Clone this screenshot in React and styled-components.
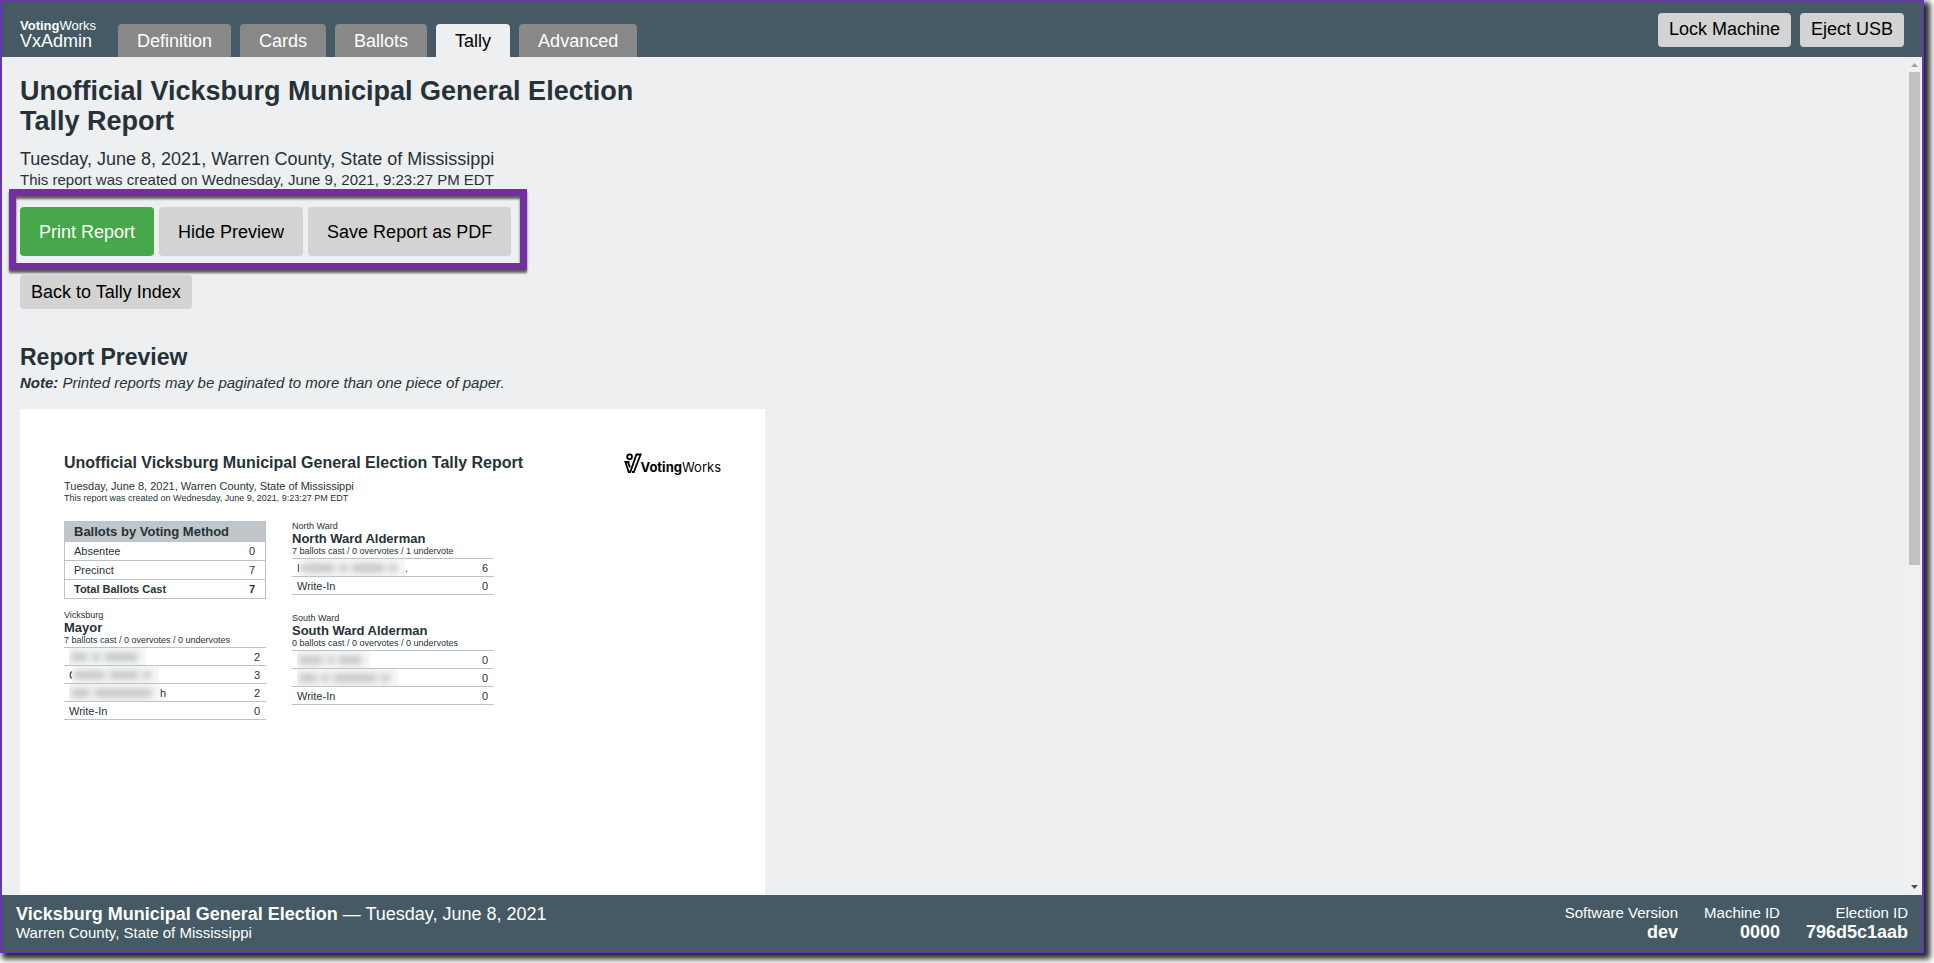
import React from "react";
import styled, { createGlobalStyle, css } from "styled-components";

const GlobalStyle = createGlobalStyle`
  *, *::before, *::after { box-sizing: border-box; }
  html, body { margin: 0; padding: 0; background: #fff; }
  body, button {
    font-family: "Liberation Sans", Arial, Helvetica, sans-serif;
    font-size: 18px;
  }
  h1, h2, h3, p { margin: 0; }
`;

const Screen = styled.div`
  display: flex;
  height: 100vh;
  padding: 0 10px 10px 0;
  overflow: hidden;
`;

const Frame = styled.div`
  display: flex;
  flex: 1;
  flex-direction: column;
  min-width: 0;
  border: 2px solid #6337b3;
  background: #edeff0;
  color: #263238;
  box-shadow: 4px 4px 6px 2px rgba(0, 0, 0, 0.85);
`;

const Header = styled.header`
  display: flex;
  flex: none;
  align-items: flex-end;
  height: 55px;
  padding: 0 18px;
  background: #455a64;
  color: #fff;
`;

const Brand = styled.div`
  display: flex;
  flex-direction: column;
  width: 80px;
  margin: 0 18px 7px 0;
  line-height: 18px;
`;

const BrandMaker = styled.span`
  font-size: 13px;
  line-height: 12px;
`;

const Tabs = styled.nav`
  display: flex;
  flex: 1;
  gap: 9px;
`;

const Tab = styled.button`
  height: 33px;
  padding: 2px 19px 0;
  border: 0;
  border-radius: 4px 4px 0 0;
  background: ${(p) => (p.$active ? "#edeff0" : "#888")};
  color: ${(p) => (p.$active ? "#000" : "#fff")};
`;

const Button = styled.button`
  height: ${(p) => (p.$large ? 49 : 34)}px;
  padding: ${(p) => (p.$large ? "2px 19px 0" : "0 11px")};
  border: 0;
  border-radius: 4px;
  background: ${(p) => (p.$primary ? "#47a74b" : "#d3d3d3")};
  color: ${(p) => (p.$primary ? "#fff" : "#000")};
`;

const HeaderActions = styled.div`
  display: flex;
  align-self: center;
  gap: 9px;
`;

const Body = styled.div`
  display: flex;
  flex: 1;
  min-height: 0;
`;

const Main = styled.main`
  flex: 1;
  min-width: 0;
  padding: 19px 18px;
  overflow-y: auto;
  scrollbar-width: none;
`;

const PageTitle = styled.h1`
  max-width: 640px;
  font-size: 27px;
  line-height: 30px;
`;

const PageMeta = styled.p`
  margin-top: 12px;
  line-height: 22px;
`;

const Small = styled.small`
  display: block;
  font-size: 15px;
  line-height: 20px;
`;

const ActionGroup = styled.div`
  position: relative;
  display: flex;
  gap: 5px;
  width: fit-content;
  margin-top: 17px;

  &::after {
    content: "";
    position: absolute;
    inset: -18px -16px -14px -11px;
    border: 7px solid #7030a0;
    filter: drop-shadow(0 3px 1px rgba(0, 0, 0, 0.6));
    pointer-events: none;
  }
`;

const BackRow = styled.div`
  display: flex;
  margin-top: 19px;
`;

const SectionTitle = styled.h2`
  margin-top: 35px;
  font-size: 23px;
  line-height: 26px;
`;

const Note = styled.p`
  margin-top: 1px;
  font-size: 15px;
  font-style: italic;
  line-height: 24px;
`;

const Paper = styled.article`
  width: 745px;
  min-height: 960px;
  margin-top: 14px;
  padding: 45px 44px;
  background: #fff;
  font-size: 11px;
`;

const PaperHeader = styled.header`
  display: flex;
  justify-content: space-between;
  align-items: flex-start;
`;

const PaperTitle = styled.h1`
  font-size: 16px;
  line-height: 18px;
`;

const PaperMeta = styled.p`
  margin-top: 7px;
  line-height: 14px;
`;

const Fine = styled.small`
  display: block;
  font-size: 9px;
  line-height: 11px;
`;

const Logo = styled.div`
  display: flex;
  align-items: flex-end;
  height: 20px;
  color: #000;
  font-family: Inter, "Liberation Sans", sans-serif;
  font-size: 13px;
  line-height: 14px;
`;

const LogoMark = styled.svg`
  flex: none;
  width: 18px;
  height: 21px;
  margin-right: -2px;
`;

const Columns = styled.div`
  display: grid;
  grid-template-columns: 202px 202px;
  gap: 26px;
  margin-top: 17px;
`;

const Table = styled.table`
  width: 100%;
  border-collapse: collapse;
`;

const rule = "1px solid #bcc3c8";

const MethodTable = styled(Table)`
  border: ${rule};

  th, td {
    height: 19px;
    padding: 0 10px 0 9px;
    border-bottom: ${rule};
    text-align: left;
  }
  thead th {
    height: 20px;
    background: #c0c6ca;
    font-size: 13px;
  }
  tbody th { font-weight: inherit; }
  td:last-child { text-align: right; }
`;

const MethodRow = styled.tr`
  font-weight: ${(p) => (p.$total ? 700 : 400)};
`;

const ContestBlock = styled.section`
  margin-top: ${(p) => (p.$first ? 0 : p.$spaced ? 18 : 11)}px;
`;

const ContestTitle = styled.h3`
  font-size: 13px;
  line-height: 14px;
`;

const ContestTable = styled(Table)`
  margin-top: 1px;
  border-top: ${rule};

  tr { border-bottom: ${rule}; }
  th, td {
    height: 18px;
    padding: 0 6px 0 5px;
    font-weight: 400;
    text-align: left;
  }
  td { text-align: right; }
`;

const Name = styled.span`
  display: flex;
  align-items: center;
  height: 17px;
`;

const Redacted = styled.span`
  display: flex;
  align-items: center;
  gap: 4px;
  width: ${(p) => p.$width}px;
  height: 17px;
  padding: 0 8px 0 2px;
  overflow: hidden;
  background: #f5f6f6;
  ${(p) => p.$lead && css`
    margin-left: ${p.$lead === "C" ? -5 : -1}px;
    z-index: 1;
  `}
`;

const Smudge = styled.i`
  flex: ${(p) => p.$part};
  height: 8px;
  border-radius: 3px;
  background: #c3c5c6;
  filter: blur(3px);
`;

const Scrollbar = styled.div`
  display: flex;
  flex: none;
  flex-direction: column;
  align-items: center;
  width: 15px;
  background: #f0f0f1;
`;

const Arrow = styled.svg`
  flex: none;
  width: 15px;
  height: 15px;
`;

const Track = styled.div`
  flex: 1;
  width: 11px;
`;

const Thumb = styled.div`
  height: 61%;
  background: #c1c1c1;
`;

const Footer = styled.footer`
  display: flex;
  flex: none;
  justify-content: space-between;
  height: 56px;
  padding: 9px 14px 0 14px;
  background: #455a64;
  color: #fff;
  line-height: 20px;
`;

const FooterSmall = styled.div`
  font-size: 15px;
  line-height: 18px;
`;

const Facts = styled.div`
  display: flex;
  gap: 26px;
  text-align: right;
`;

const contests = {
  mayor: {
    district: "Vicksburg",
    title: "Mayor",
    stats: "7 ballots cast / 0 overvotes / 0 undervotes",
    rows: [
      { width: 77, words: [2, 1, 4], votes: 2 },
      { lead: "C", width: 87, words: [4, 4, 1], votes: 3 },
      { width: 91, words: [2, 6], tail: "h", votes: 2 },
      { name: "Write-In", votes: 0 },
    ],
  },
  north: {
    district: "North Ward",
    title: "North Ward Alderman",
    stats: "7 ballots cast / 0 overvotes / 1 undervote",
    rows: [
      { lead: "I", width: 106, words: [4, 1, 4, 1], tail: ".", votes: 6 },
      { name: "Write-In", votes: 0 },
    ],
  },
  south: {
    district: "South Ward",
    title: "South Ward Alderman",
    stats: "0 ballots cast / 0 overvotes / 0 undervotes",
    rows: [
      { width: 73, words: [3, 1, 3], votes: 0 },
      { width: 101, words: [2, 1, 5, 1], votes: 0 },
      { name: "Write-In", votes: 0 },
    ],
  },
};

function Contest({ contest, ...rest }) {
  return (
    <ContestBlock {...rest}>
      <Fine>{contest.district}</Fine>
      <ContestTitle>{contest.title}</ContestTitle>
      <Fine>{contest.stats}</Fine>
      <ContestTable>
        <tbody>
          {contest.rows.map((row, i) => (
            <tr key={i}>
              <th scope="row">
                {row.name || (
                  <Name>
                    {row.lead}
                    <Redacted $width={row.width} $lead={row.lead}>
                      {row.words.map((part, n) => (
                        <Smudge key={n} $part={part} />
                      ))}
                    </Redacted>
                    {row.tail}
                  </Name>
                )}
              </th>
              <td>{row.votes}</td>
            </tr>
          ))}
        </tbody>
      </ContestTable>
    </ContestBlock>
  );
}

function VotingWorksLogo() {
  return (
    <Logo>
      <LogoMark viewBox="0 0 18 21" fill="none" stroke="#000" strokeWidth="1.8">
        <circle cx="5.600" cy="3.800" r="2.400" />
        <path d="M5.500 9H1.400L4.700 19h1.600L12.400 1.500h4.200L9.800 19H8M4 9.400l2 5" />
      </LogoMark>
      <span><b>Voting</b>Works</span>
    </Logo>
  );
}

export default function App() {
  return (
    <Screen>
      <GlobalStyle />
      <Frame>
        <Header>
          <Brand>
            <BrandMaker><b>Voting</b>Works</BrandMaker>
            <span>VxAdmin</span>
          </Brand>
          <Tabs>
            {["Definition", "Cards", "Ballots", "Tally", "Advanced"].map((tab) => (
              <Tab key={tab} type="button" $active={tab === "Tally"}>{tab}</Tab>
            ))}
          </Tabs>
          <HeaderActions>
            <Button type="button">Lock Machine</Button>
            <Button type="button">Eject USB</Button>
          </HeaderActions>
        </Header>

        <Body>
          <Main>
            <PageTitle>Unofficial Vicksburg Municipal General Election Tally Report</PageTitle>
            <PageMeta>
              Tuesday, June 8, 2021, Warren County, State of Mississippi
              <Small>This report was created on Wednesday, June 9, 2021, 9:23:27 PM EDT</Small>
            </PageMeta>
            <ActionGroup>
              <Button type="button" $large $primary>Print Report</Button>
              <Button type="button" $large>Hide Preview</Button>
              <Button type="button" $large>Save Report as PDF</Button>
            </ActionGroup>
            <BackRow>
              <Button type="button">Back to Tally Index</Button>
            </BackRow>
            <SectionTitle>Report Preview</SectionTitle>
            <Note><b>Note:</b> Printed reports may be paginated to more than one piece of paper.</Note>

            <Paper>
              <PaperHeader>
                <div>
                  <PaperTitle>Unofficial Vicksburg Municipal General Election Tally Report</PaperTitle>
                  <PaperMeta>
                    Tuesday, June 8, 2021, Warren County, State of Mississippi
                    <Fine>This report was created on Wednesday, June 9, 2021, 9:23:27 PM EDT</Fine>
                  </PaperMeta>
                </div>
                <VotingWorksLogo />
              </PaperHeader>
              <Columns>
                <div>
                  <MethodTable>
                    <thead>
                      <tr><th colSpan={2}>Ballots by Voting Method</th></tr>
                    </thead>
                    <tbody>
                      <MethodRow><th scope="row">Absentee</th><td>0</td></MethodRow>
                      <MethodRow><th scope="row">Precinct</th><td>7</td></MethodRow>
                      <MethodRow $total><th scope="row">Total Ballots Cast</th><td>7</td></MethodRow>
                    </tbody>
                  </MethodTable>
                  <Contest contest={contests.mayor} />
                </div>
                <div>
                  <Contest contest={contests.north} $first />
                  <Contest contest={contests.south} $spaced />
                </div>
              </Columns>
            </Paper>
          </Main>
          <Scrollbar aria-hidden="true">
            <Arrow viewBox="0 0 15 15"><path d="M4 10h7L7.500 6z" fill="#a3a3a3" /></Arrow>
            <Track><Thumb /></Track>
            <Arrow viewBox="0 0 15 15"><path d="M4 5h7L7.500 9z" fill="#505050" /></Arrow>
          </Scrollbar>
        </Body>

        <Footer>
          <div>
            <b>Vicksburg Municipal General Election</b> — Tuesday, June 8, 2021
            <FooterSmall>Warren County, State of Mississippi</FooterSmall>
          </div>
          <Facts>
            <div><FooterSmall>Software Version</FooterSmall><b>dev</b></div>
            <div><FooterSmall>Machine ID</FooterSmall><b>0000</b></div>
            <div><FooterSmall>Election ID</FooterSmall><b>796d5c1aab</b></div>
          </Facts>
        </Footer>
      </Frame>
    </Screen>
  );
}
